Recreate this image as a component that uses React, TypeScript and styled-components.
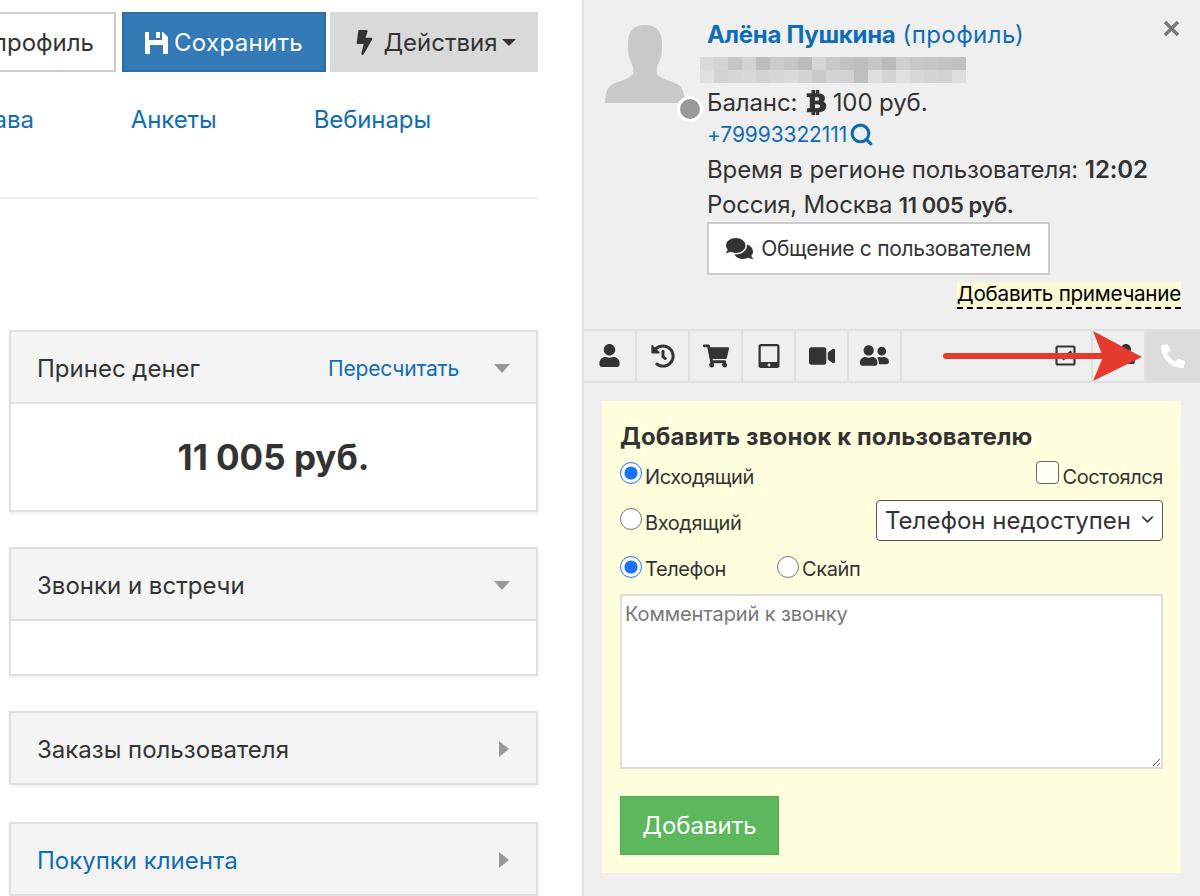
import styled, { createGlobalStyle } from "styled-components";
import {
    FaBolt, FaBtc, FaComments, FaHistory, FaPhoneAlt, FaRegCheckSquare,
    FaShoppingCart, FaTabletAlt, FaUser, FaUserFriends, FaVideo,
} from "react-icons/fa";
import { FiChevronDown, FiSearch } from "react-icons/fi";

const GlobalStyle = createGlobalStyle`
    html, body { margin: 0; padding: 0; height: 896px; overflow: hidden; background: #fff; }
    body { font-family: Inter, "Noto Sans", sans-serif; color: #333; }
    * { box-sizing: border-box; }
`;

const pixelColors = [
    "#d9d9d9", "#d4d4d4", "#c6c6c6", "#d3d3d3", "#bdbdbd", "#cbcbcb", "#c6c6c6", "#bcbcbc", "#d6d6d6", "#c8c8c8",
    "#c2c2c2", "#bebebe", "#c6c6c6", "#bbbbbb", "#d0d0d0", "#c8c8c8", "#c6c6c6", "#c4c4c4", "#c0c0c0",
    "#e0e0e0", "#d2d2d2", "#d6d6d6", "#d8d8d8", "#d2d2d2", "#d6d6d6", "#dadada", "#d4d4d4", "#c9c9c9", "#d4d4d4",
    "#d2d2d2", "#bfbfbf", "#dedede", "#d4d4d4", "#e0e0e0", "#d8d8d8", "#d4d4d4", "#d2d2d2", "#dedede",
];

export default function App() {
    return (
        <Page>
            <GlobalStyle />
            <LeftColumn>
                <Toolbar>
                    <ProfileButton>Изменить профиль</ProfileButton>
                    <SaveButton>
                        <svg width="23" height="23" viewBox="0 0 23 23">
                            <path
                                fillRule="evenodd"
                                fill="currentColor"
                                d="M0 1h4v8h13V1h1l5 5v17H0zM5 14v9h13v-9zM11 1h4v6h-4z"
                            />
                        </svg>
                        Сохранить
                    </SaveButton>
                    <ActionsButton><FaBolt size={25} />Действия<Caret /></ActionsButton>
                </Toolbar>
                <NavLinks>
                    <NavLink>Права</NavLink>
                    <NavLink>Анкеты</NavLink>
                    <NavLink>Вебинары</NavLink>
                </NavLinks>
                <Cards>
                    <Card>
                        <CardHeader>
                            <CardTitle>Принес денег</CardTitle>
                            <Recalc>Пересчитать</Recalc>
                            <TriangleDown />
                        </CardHeader>
                        <CardBody $height={108}><Total>11 005 руб.</Total></CardBody>
                    </Card>
                    <Card>
                        <CardHeader>
                            <CardTitle>Звонки и встречи</CardTitle>
                            <TriangleDown />
                        </CardHeader>
                        <CardBody $height={55} />
                    </Card>
                    <Card>
                        <CardHeader>
                            <CardTitle>Заказы пользователя</CardTitle>
                            <TriangleRight />
                        </CardHeader>
                    </Card>
                    <LastCard>
                        <CardHeader>
                            <CardTitle $link>Покупки клиента</CardTitle>
                            <TriangleRight />
                        </CardHeader>
                    </LastCard>
                </Cards>
            </LeftColumn>

            <SidePanel>
                <CloseIcon width="17" height="17" viewBox="0 0 17 17">
                    <path d="M2 2l13 13M15 2L2 15" stroke="#777" strokeWidth="3.4" />
                </CloseIcon>
                <UserBlock>
                    <AvatarBox>
                        <svg width="80" height="78" viewBox="0 0 80 78">
                            <path
                                d="M40 0c-12 0-17 7-17 18 0 8 0 13 3 19 2 4 3 9 2 12-2 3-7 5-15 8-9 3-12 6-13 21h80c-1-15-4-18-13-21-8-3-13-5-15-8-1-3 0-8 2-12 3-6 3-11 3-19C57 7 52 0 40 0z"
                                fill="#c9c9c9"
                            />
                        </svg>
                        <StatusDot />
                    </AvatarBox>
                    <UserInfo>
                        <NameLine><b>Алёна Пушкина</b> (профиль)</NameLine>
                        <BlurredEmail>
                            {pixelColors.map((color, i) => (
                                <Pixel key={i} $color={color} />
                            ))}
                        </BlurredEmail>
                        <InfoLine>Баланс: <BtcIcon size={25} /> 100 руб.</InfoLine>
                        <PhoneLine>+79993322111<FiSearch size={25} strokeWidth={3} /></PhoneLine>
                        <InfoLine>Время в регионе пользователя: <b>12:02</b></InfoLine>
                        <RegionLine>Россия, Москва <b>11 005 руб.</b></RegionLine>
                        <ChatButton><FaComments size={27} />Общение с пользователем</ChatButton>
                    </UserInfo>
                </UserBlock>
                <NoteRow><Note>Добавить примечание</Note></NoteRow>

                <TabBar>
                    <Tab><FaUser size={23} /></Tab>
                    <Tab><FaHistory size={24} /></Tab>
                    <Tab><FaShoppingCart size={26} /></Tab>
                    <Tab><FaTabletAlt size={24} /></Tab>
                    <Tab><FaVideo size={26} /></Tab>
                    <Tab><FaUserFriends size={29} /></Tab>
                    <TabSpacer />
                    <Tab><FaRegCheckSquare size={23} /></Tab>
                    <Tab><HiddenUser size={20} /></Tab>
                    <ActiveTab><FaPhoneAlt size={24} /></ActiveTab>
                    <Arrow width="204" height="54" viewBox="0 0 204 54">
                        <line x1="6" y1="27" x2="165" y2="27" stroke="#e53a2e" strokeWidth="6" strokeLinecap="round" />
                        <polygon points="153,2 202,28 153,52 163,28" fill="#e53a2e" />
                    </Arrow>
                </TabBar>

                <CallForm>
                    <FormTitle>Добавить звонок к пользователю</FormTitle>
                    <FirstRow>
                        <Choice><Radio name="direction" defaultChecked />Исходящий</Choice>
                        <Choice><Check type="checkbox" />Состоялся</Choice>
                    </FirstRow>
                    <SecondRow>
                        <Choice><Radio name="direction" />Входящий</Choice>
                        <SelectWrap>
                            <Select defaultValue="na">
                                <option value="na">Телефон недоступен</option>
                            </Select>
                            <SelectArrow><FiChevronDown size={19} /></SelectArrow>
                        </SelectWrap>
                    </SecondRow>
                    <ChannelRow>
                        <Choice><Radio name="channel" defaultChecked />Телефон</Choice>
                        <Choice><Radio name="channel" />Скайп</Choice>
                    </ChannelRow>
                    <Comment placeholder="Комментарий к звонку" />
                    <AddButton type="button">Добавить</AddButton>
                </CallForm>
            </SidePanel>
        </Page>
    );
}

const Page = styled.div`
    display: flex;
    width: 1200px;
    height: 896px;
    overflow: hidden;
`;

const LeftColumn = styled.div`
    width: 582px;
    flex: none;
    padding: 12px 44px 0 0;
    overflow: hidden;
`;

const Toolbar = styled.div`
    display: flex;
    justify-content: flex-end;
    height: 60px;
    gap: 4px;
`;

const ToolButton = styled.button`
    display: flex;
    align-items: center;
    justify-content: center;
    flex: none;
    height: 60px;
    padding: 0;
    font: 24px Inter, sans-serif;
    white-space: nowrap;
    border: 2px solid transparent;
`;

const ProfileButton = styled(ToolButton)`
    width: 240px;
    margin-right: 2px;
    justify-content: flex-end;
    padding-right: 20px;
    background: #fff;
    border-color: #ccc;
    color: #333;
`;

const SaveButton = styled(ToolButton)`
    width: 204px;
    gap: 6px;
    letter-spacing: 0.3px;
    background: #337ab7;
    border-color: #2e6da4;
    color: #fff;
`;

const ActionsButton = styled(ToolButton)`
    width: 208px;
    gap: 6px;
    background: #d9d9d9;
    color: #333;
`;

const Caret = styled.span`
    width: 0;
    height: 0;
    margin-left: -2px;
    border-left: 7px solid transparent;
    border-right: 7px solid transparent;
    border-top: 7px solid #333;
`;

const NavLinks = styled.div`
    display: flex;
    justify-content: flex-end;
    gap: 97px;
    height: 127px;
    padding: 33px 107px 0 0;
    border-bottom: 2px solid #eee;
`;

const NavLink = styled.span`
    font-size: 24px;
    line-height: 30px;
    letter-spacing: -0.1px;
    color: #0f6db5;
`;

const Cards = styled.div`
    display: flex;
    flex-direction: column;
    gap: 35px;
    margin: 131px 0 0 9px;
`;

const Card = styled.div`
    border: 2px solid #e0e0e0;
    box-shadow: 0 2px 3px rgba(0, 0, 0, 0.06);
`;

const LastCard = styled(Card)`
    margin-top: 2px;
`;

const CardHeader = styled.div`
    display: flex;
    align-items: center;
    height: 70px;
    padding: 2px 26px 0 26px;
    background: #f4f4f4;
`;

const CardTitle = styled.div<{ $link?: boolean }>`
    flex: 1;
    font-size: 24px;
    color: ${props => (props.$link ? "#0f6db5" : "#333")};
`;

const Recalc = styled.span`
    margin-right: 35px;
    font-size: 21px;
    letter-spacing: -0.2px;
    color: #0f6db5;
`;

const TriangleDown = styled.span`
    width: 0;
    height: 0;
    border-left: 8px solid transparent;
    border-right: 8px solid transparent;
    border-top: 9px solid #999;
`;

const TriangleRight = styled.span`
    width: 0;
    height: 0;
    margin-right: 1px;
    border-top: 8px solid transparent;
    border-bottom: 8px solid transparent;
    border-left: 10px solid #999;
`;

const CardBody = styled.div<{ $height: number }>`
    display: flex;
    align-items: center;
    justify-content: center;
    height: ${props => props.$height}px;
    border-top: 2px solid #e0e0e0;
`;

const Total = styled.div`
    font-size: 35px;
    font-weight: 700;
    color: #333;
`;

const SidePanel = styled.div`
    position: relative;
    flex: 1;
    padding-top: 18px;
    background: #efefef;
    border-left: 2px solid #e2e2e2;
`;

const CloseIcon = styled.svg`
    position: absolute;
    top: 20px;
    right: 20px;
`;

const UserBlock = styled.div`
    display: flex;
    padding-left: 21px;
`;

const AvatarBox = styled.div`
    position: relative;
    width: 102px;
    height: 90px;
    flex: none;
    padding-top: 7px;
`;

const StatusDot = styled.span`
    position: absolute;
    left: 72px;
    top: 78px;
    width: 26px;
    height: 26px;
    border-radius: 50%;
    background: #999;
    border: 3px solid #fff;
`;

const UserInfo = styled.div`
    display: flex;
    flex-direction: column;
    align-items: flex-start;
    font-size: 24px;
    letter-spacing: -0.1px;
    line-height: 34px;
    b { font-weight: 600; }
`;

const NameLine = styled.div`
    letter-spacing: 0.4px;
    color: #0f6db5;
    b { font-weight: 700; letter-spacing: -0.3px; }
`;

const BlurredEmail = styled.div`
    display: grid;
    grid-template-columns: repeat(19, 14px);
    grid-auto-rows: 13px;
    margin: 5px 0 1.5px -7px;
`;

const Pixel = styled.span<{ $color: string }>`
    background: ${props => props.$color};
`;

const InfoLine = styled.div`
    height: 35px;
    line-height: 35px;
    white-space: nowrap;
`;

const RegionLine = styled(InfoLine)`
    letter-spacing: -0.2px;
    b { font-size: 22px; letter-spacing: -0.4px; }
`;

const BtcIcon = styled(FaBtc)`
    margin-right: -3px;
    vertical-align: -4px;
    stroke: currentColor;
    stroke-width: 24px;
`;

const PhoneLine = styled.div`
    display: flex;
    align-items: center;
    gap: 2px;
    height: 30px;
    margin-bottom: 2px;
    font-size: 21px;
    letter-spacing: -0.1px;
    color: #0f6db5;
`;

const ChatButton = styled.button`
    display: flex;
    align-items: center;
    justify-content: center;
    gap: 8px;
    width: 343px;
    height: 53px;
    padding: 0;
    background: #fff;
    border: 2px solid #ccc;
    font: 21px Inter, sans-serif;
    letter-spacing: -0.3px;
    color: #333;
`;

const NoteRow = styled.div`
    display: flex;
    justify-content: flex-end;
    margin-top: 7px;
    padding-right: 19px;
`;

const Note = styled.span`
    height: 27px;
    background: #fbfbd6;
    border-bottom: 2px dashed #000;
    font-size: 20.7px;
    line-height: 24px;
    letter-spacing: -0.3px;
    color: #000;
`;

const TabBar = styled.div`
    position: relative;
    display: flex;
    height: 54px;
    margin-top: 20px;
    border-top: 2px solid #e0e0e0;
    border-bottom: 2px solid #e0e0e0;
`;

const Tab = styled.div`
    display: flex;
    align-items: center;
    justify-content: center;
    flex: none;
    width: 53px;
    border-right: 2px solid #e0e0e0;
    color: #333;
`;

const HiddenUser = styled(FaUser)`
    margin: 0 0 4px 14px;
`;

const TabSpacer = styled.div`
    flex: 1;
`;

const ActiveTab = styled(Tab)`
    width: 54px;
    background: #dcdcdc;
    border-right: none;
    color: #fff;
`;

const Arrow = styled.svg`
    position: absolute;
    left: 356px;
    top: -2px;
`;

const CallForm = styled.form`
    width: 579px;
    height: 472px;
    margin: 18px 0 0 18px;
    padding: 19px 18px 0;
    background: #ffffdd;
`;

const FormTitle = styled.div`
    font-size: 24px;
    font-weight: 700;
    line-height: 34px;
    letter-spacing: 0.1px;
    color: #333;
`;

const FormRow = styled.div`
    display: flex;
    align-items: center;
    justify-content: space-between;
`;

const FirstRow = styled(FormRow)`
    height: 46px;
`;

const SecondRow = styled(FormRow)`
    height: 41px;
    label { padding-top: 5px; }
`;

const Choice = styled.label`
    display: flex;
    align-items: center;
    gap: 3px;
    font-size: 20px;
    line-height: 24px;
    letter-spacing: -0.4px;
    color: #333;
`;

const Radio = styled.input.attrs({ type: "radio" })`
    width: 22px;
    height: 22px;
    margin: -8px 0 0;
    accent-color: #1a73ff;
`;

const Check = styled.input`
    appearance: none;
    width: 23px;
    height: 23px;
    margin: -8px 0 0;
    background: #fffff4;
    border: 1.5px solid #666;
    border-radius: 4px;
`;

const SelectWrap = styled.div`
    position: relative;
    width: 287px;
    height: 41px;
`;

const Select = styled.select`
    width: 100%;
    height: 100%;
    padding: 0 0 0 8px;
    appearance: none;
    background: #fff;
    border: 1.5px solid #555;
    border-radius: 4px;
    font: 24px Inter, sans-serif;
    color: #333;
`;

const SelectArrow = styled.span`
    position: absolute;
    right: 6px;
    top: 10px;
    color: #333;
    pointer-events: none;
`;

const ChannelRow = styled.div`
    display: flex;
    gap: 51px;
    height: 53px;
    padding-top: 16px;
    align-items: flex-start;
    input { margin-top: -4px; }
`;

const Comment = styled.textarea`
    display: block;
    width: 543px;
    height: 175px;
    padding: 6px 3px;
    background: #fff;
    border: 2px solid #ddd;
    font: 20px Inter, sans-serif;
    letter-spacing: -0.1px;
    &::placeholder { color: #777; }
`;

const AddButton = styled.button`
    display: block;
    width: 159px;
    height: 59px;
    margin-top: 27px;
    padding: 0;
    background: #5cb85c;
    border: 1px solid #4cae4c;
    font: 24px Inter, sans-serif;
    color: #fff;
`;
